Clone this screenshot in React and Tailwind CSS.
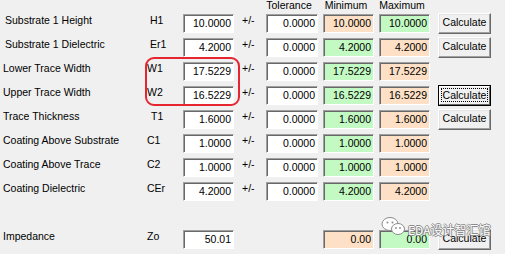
import React from 'react';

const rows = [
  { label: 'Substrate 1 Height', sym: 'H1', val: '10.0000', min: '10.0000', max: '10.0000', minPeach: true, calc: true, shift: true },
  { label: 'Substrate 1 Dielectric', sym: 'Er1', val: '4.2000', min: '4.2000', max: '4.2000', calc: true, shift: true },
  { label: 'Lower Trace Width', sym: 'W1', val: '17.5229', min: '17.5229', max: '17.5229' },
  { label: 'Upper Trace Width', sym: 'W2', val: '16.5229', min: '16.5229', max: '16.5229', calc: true, focused: true },
  { label: 'Trace Thickness', sym: 'T1', val: '1.6000', min: '1.6000', max: '1.6000', calc: true, symShift: true },
  { label: 'Coating Above Substrate', sym: 'C1', val: '1.0000', min: '1.0000', max: '1.0000' },
  { label: 'Coating Above Trace', sym: 'C2', val: '1.0000', min: '1.0000', max: '1.0000' },
  { label: 'Coating Dielectric', sym: 'CEr', val: '4.2000', min: '4.2000', max: '4.2000' },
];

function Field({ value, tone, width = 'w-[51px]' }) {
  const bg = tone === 'peach' ? 'bg-[#fde0c5]' : tone === 'green' ? 'bg-[#c3fac3]' : 'bg-white';
  return (
    <div
      className={`${width} ${bg} h-[19px] flex items-center justify-end pr-[2px] pt-[1px] border border-t-[#a0a0a0] border-l-[#a0a0a0] border-r-white border-b-white shadow-[inset_1px_1px_0_#696969]`}
    >
      {value}
    </div>
  );
}

function CalcButton({ focused }) {
  if (focused) {
    return (
      <div className="w-[53px] h-[21px] border border-black">
        <div className="w-full h-full flex items-center justify-center bg-[#f0f0f0] border border-t-white border-l-white border-r-[#696969] border-b-[#696969]">
          <span className="border border-dotted border-black px-[1px] leading-[12px]">Calculate</span>
        </div>
      </div>
    );
  }
  return (
    <div className="w-[53px] h-[21px] flex items-center justify-center bg-[#f0f0f0] border border-t-white border-l-white border-r-[#696969] border-b-[#696969] shadow-[inset_-1px_-1px_0_#a0a0a0,inset_1px_1px_0_#e3e3e3]">
      Calculate
    </div>
  );
}

function Row({ r }) {
  return (
    <div className="h-[24px] flex items-center pl-[3px]">
      <span className={`w-[144px] mb-[5px] ${r.shift ? 'pl-[2px]' : ''}`}>{r.label}</span>
      <span className={`w-[36px] mb-[5px] ${r.shift ? 'pl-[3px]' : r.symShift ? 'pl-[4px]' : ''}`}>{r.sym}</span>
      <Field value={r.val} />
      <span className="w-[32px] pl-[8px] mb-[5px]">+/-</span>
      <Field value="0.0000" width="w-[52px]" />
      <div className="w-[5px]" />
      <Field value={r.min} tone={r.minPeach ? 'peach' : 'green'} />
      <div className="w-[5px]" />
      <Field value={r.max} tone={r.minPeach ? 'green' : 'peach'} />
      <div className="w-[8px]" />
      {r.calc && <CalcButton focused={r.focused} />}
    </div>
  );
}

export default function App() {
  return (
    <div
      className="relative w-[505px] h-[254px] overflow-hidden bg-[#f0f0f0] text-black text-[10.5px]"
      style={{ fontFamily: '"Liberation Sans", Arial, sans-serif' }}
    >
      <div className="h-[11px] flex items-center leading-none">
        <div className="w-[266px]" />
        <span className="w-[52px] text-center -ml-[3px]">Tolerance</span>
        <span className="w-[56px] text-center ml-[3px]">Minimum</span>
        <span className="w-[56px] text-center">Maximum</span>
      </div>

      {rows.map((r) => (
        <Row key={r.sym} r={r} />
      ))}

      <div className="h-[24px]" />

      <div className="h-[24px] flex items-center pl-[3px]">
        <span className="w-[144px] mb-[5px]">Impedance</span>
        <span className="w-[36px] mb-[5px]">Zo</span>
        <Field value="50.01" />
        <div className="w-[89px]" />
        <Field value="0.00" tone="peach" />
        <div className="w-[5px]" />
        <Field value="0.00" tone="green" />
        <div className="w-[8px]" />
        <CalcButton />
      </div>

      {/* red annotation around W1/W2 */}
      <div className="absolute left-[145px] top-[57px] w-[95px] h-[49px] border-[2.5px] border-[#e52630] rounded-[9px]" />

      {/* watermark */}
      <div className="absolute left-[381px] top-[216px] flex items-start gap-[2px]">
        <svg width="25" height="20" viewBox="0 0 25 20">
          <ellipse cx="9" cy="8" rx="8" ry="6.5" fill="#fff" stroke="#8c8c8c" strokeWidth="1" />
          <circle cx="6.5" cy="6.5" r="1" fill="#8c8c8c" />
          <circle cx="11.5" cy="6.5" r="1" fill="#8c8c8c" />
          <ellipse cx="17" cy="13" rx="6.5" ry="5.5" fill="#fff" stroke="#8c8c8c" strokeWidth="1" />
          <circle cx="15" cy="12" r="0.9" fill="#8c8c8c" />
          <circle cx="19" cy="12" r="0.9" fill="#8c8c8c" />
        </svg>
        <span
          className="text-[12px] text-white mt-[8px] leading-none"
          style={{
            fontFamily: '"Noto Sans CJK SC", "Liberation Sans", sans-serif',
            textShadow: '1px 0 0 #8c8c8c, -1px 0 0 #8c8c8c, 0 1px 0 #8c8c8c, 0 -1px 0 #8c8c8c',
          }}
        >
          EDA设计智汇馆
        </span>
      </div>
    </div>
  );
}
